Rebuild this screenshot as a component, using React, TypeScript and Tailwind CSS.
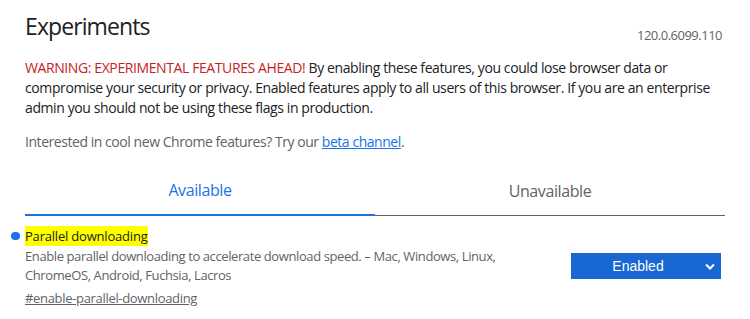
import React from "react";

export default function App() {
  return (
    <div
      className="w-[750px] h-[319px] bg-white overflow-hidden text-[#202124]"
      style={{ fontFamily: '"Open Sans", sans-serif' }}
    >
      <div className="px-[25px]">
        <div className="flex items-end justify-between pt-[10px]">
          <h1 className="text-[23px] leading-[32px] font-normal tracking-[-0.9px] text-[#202124]">Experiments</h1>
          <div className="text-[13px] leading-[18px] tracking-[-0.5px] text-[#5f6368] pr-[3px] mb-[-2px]">
            120.0.6099.110
          </div>
        </div>
        <p className="mt-[16px] text-[14px] leading-[20px] tracking-[-0.4px] text-[#202124]">
          <span className="text-[#c5221f]">WARNING: EXPERIMENTAL FEATURES AHEAD! </span>By enabling these
          features, you could lose browser data or compromise your security or privacy. Enabled features
          apply to all users of this browser. If you are an enterprise admin you should not be using these
          flags in production.
        </p>
        <p className="mt-[14px] text-[14px] leading-[20px] tracking-[-0.45px] text-[#5f6368]">
          Interested in cool new Chrome features? Try our{" "}
          <a className="text-[#1a73e8] underline" href="#">beta channel</a>.
        </p>
        <div className="mt-[17px] grid grid-cols-2">
          <div className="h-[47px] pb-[3px] flex items-center justify-center text-[16px] tracking-[-0.4px] text-[#1a73e8] border-b-2 border-[#1a73e8]">
            Available
          </div>
          <div className="h-[47px] pb-[3px] flex items-center justify-center text-[16px] tracking-[-0.4px] text-[#5f6368] border-b border-[#5f6368] mb-[1px]">
            Unavailable
          </div>
        </div>
        <div className="mt-[10px] flex items-start justify-between">
          <div className="relative">
            <span className="absolute left-[-14px] top-[5px] w-[9px] h-[8px] rounded-full bg-[#1a73e8]" />
            <div className="text-[13px] leading-[18px] tracking-[-0.2px]">
              <span className="bg-[#ffff00] text-[#202124] py-[1px]">Parallel downloading</span>
            </div>
            <p className="mt-[2px] w-[490px] text-[13px] leading-[19px] tracking-[-0.4px] text-[#5f6368]">
              Enable parallel downloading to accelerate download speed. – Mac, Windows, Linux, ChromeOS,
              Android, Fuchsia, Lacros
            </p>
            <a
              className="inline-block mt-[2px] text-[13px] leading-[19px] tracking-[-0.32px] text-[#5f6368] underline"
              href="#"
            >
              #enable-parallel-downloading
            </a>
          </div>
          <div className="mt-[26px] mr-[4px] relative w-[150px] h-[26px] bg-[#1967d2] text-white flex items-center justify-center shrink-0">
            <span
              className="text-[14px] leading-[26px] pr-[16px]"
              style={{ fontFamily: '"Liberation Sans", Arial, sans-serif' }}
            >
              Enabled
            </span>
            <svg className="absolute right-[6px] top-[10px]" width="10" height="7" viewBox="0 0 10 7">
              <path d="M1 1.5 L5 5.5 L9 1.5" fill="none" stroke="white" strokeWidth="2" />
            </svg>
          </div>
        </div>
      </div>
    </div>
  );
}
